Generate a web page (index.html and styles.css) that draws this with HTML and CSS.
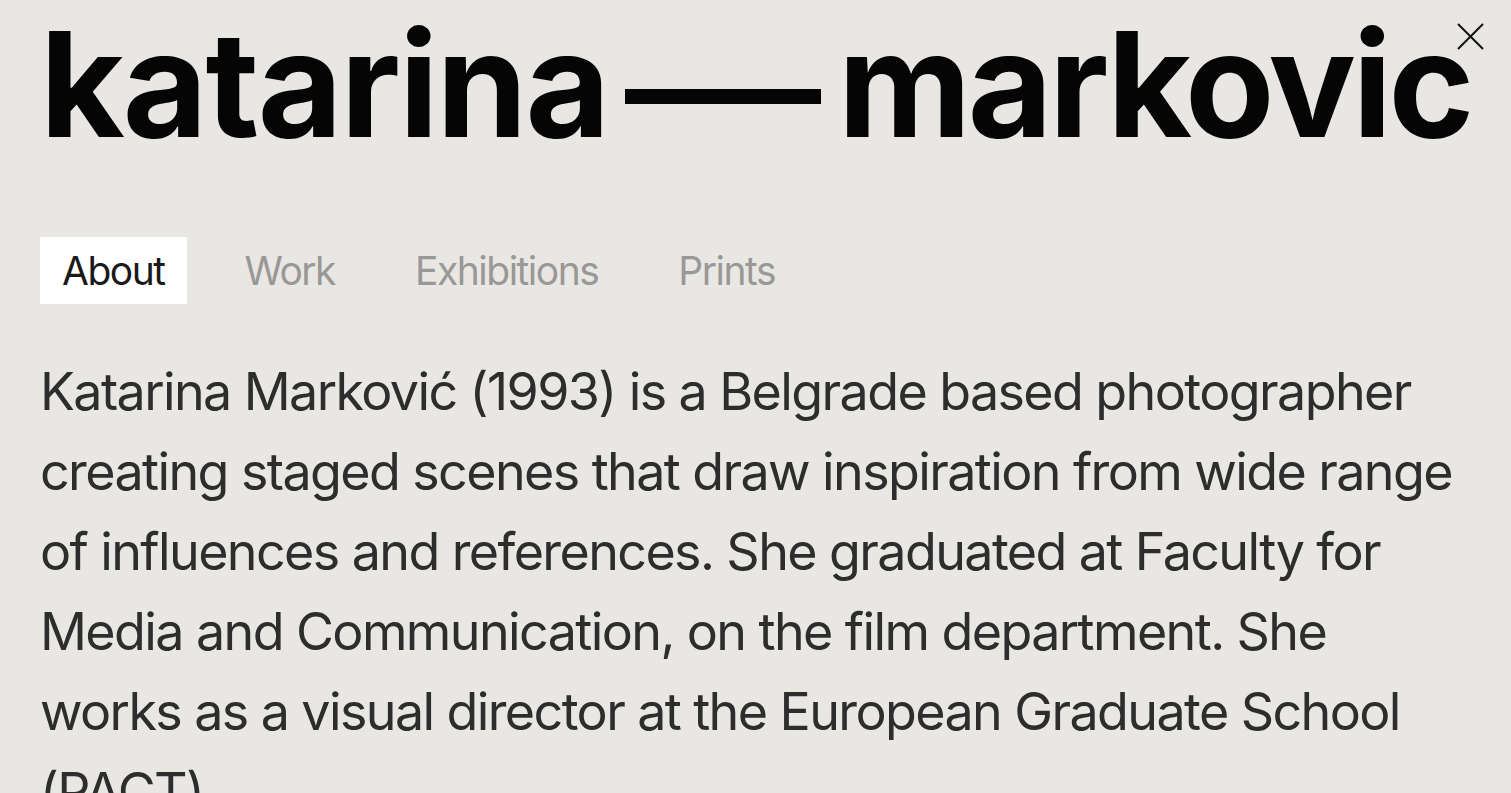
FILE: index.html
```html
<!DOCTYPE html>
<html lang="en">
<head>
<meta charset="utf-8">
<title>katarina markovic</title>
<link rel="stylesheet" href="styles.css">
</head>
<body>
<div class="page">
  <header class="masthead">
    <h1 class="title">
      <span class="word first">katarina</span>
      <span class="dash"></span>
      <span class="word last">markovic</span>
    </h1>
    <button class="close" aria-label="Close">
      <svg width="27" height="27" viewBox="0 0 27 27"><path d="M1 1L26 26M26 1L1 26" stroke="#111" stroke-width="2" fill="none"/></svg>
    </button>
  </header>
  <nav class="tabs">
    <a class="tab active">About</a>
    <a class="tab">Work</a>
    <a class="tab">Exhibitions</a>
    <a class="tab">Prints</a>
  </nav>
  <p class="bio">Katarina Marković (1993) is a Belgrade based photographer creating staged scenes that draw inspiration from wide range of influences and references. She graduated at Faculty for Media and Communication, on the film department. She works as a visual director at the European Graduate School (PACT).</p>
</div>
</body>
</html>
```
FILE: styles.css
```css
html, body {
  margin: 0;
  padding: 0;
  background: #e9e7e4;
  overflow: hidden;
}
.page {
  padding: 0 40px;
  font-family: Inter, "Noto Sans", sans-serif;
  color: #2d2d2d;
}
.masthead {
  position: relative;
}
.title {
  margin: -6px 0 0;
  display: flex;
  align-items: center;
  gap: 17px;
  font-size: 146px;
  font-weight: 700;
  line-height: 180px;
  color: #050505;
}
.word.first {
  letter-spacing: -2px;
}
.word.last {
  letter-spacing: -3.5px;
}
.dash {
  flex: 1;
  height: 15px;
  background: #050505;
  margin-top: 24px;
}
.close {
  position: absolute;
  top: 29px;
  right: -13px;
  width: 27px;
  height: 27px;
  padding: 0;
  border: 0;
  background: none;
}
.close svg { display: block; }
.tabs {
  display: flex;
  gap: 36px;
  margin-top: 63px;
}
.tab {
  display: block;
  padding: 0 22px;
  height: 67px;
  line-height: 67px;
  font-size: 39px;
  letter-spacing: -1.5px;
  color: #999896;
}
.tab.active {
  background: #ffffff;
  color: #1a1a1a;
}
.bio {
  margin: 48px 0 0;
  font-size: 52px;
  letter-spacing: -1.6px;
  line-height: 80px;
  color: #2d2d2d;
}
```
